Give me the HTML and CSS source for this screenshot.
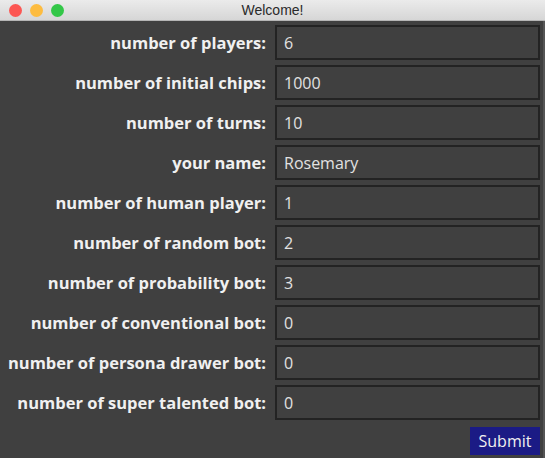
FILE: index.html
```html
<!DOCTYPE html>
<html>
<head>
<meta charset="utf-8">
<link rel="stylesheet" href="styles.css">
</head>
<body>
<div class="window">
  <div class="titlebar">
    <div class="lights">
      <span class="light red"></span>
      <span class="light yellow"></span>
      <span class="light green"></span>
    </div>
    <div class="title">Welcome!</div>
  </div>
  <div class="content">
    <div class="form">
      <label class="label">number of players:</label><div class="field">6</div>
      <label class="label">number of initial chips:</label><div class="field">1000</div>
      <label class="label">number of turns:</label><div class="field">10</div>
      <label class="label">your name:</label><div class="field">Rosemary</div>
      <label class="label">number of human player:</label><div class="field">1</div>
      <label class="label">number of random bot:</label><div class="field">2</div>
      <label class="label">number of probability bot:</label><div class="field">3</div>
      <label class="label">number of conventional bot:</label><div class="field">0</div>
      <label class="label">number of persona drawer bot:</label><div class="field">0</div>
      <label class="label">number of super talented bot:</label><div class="field">0</div>
    </div>
    <div class="actions">
      <button class="submit">Submit</button>
    </div>
  </div>
</div>
</body>
</html>
```
FILE: styles.css
```css
html, body {
  margin: 0;
  padding: 0;
  background: #404040;
}
.window {
  width: 545px;
  height: 458px;
  background: #404040;
  display: flex;
  flex-direction: column;
  box-sizing: border-box;
  border-right: 2px solid #555;
}
.titlebar {
  height: 20px;
  flex: none;
  margin-right: -2px;
  background: linear-gradient(#ebebeb, #d6d6d6);
  border-bottom: 1px solid #b5b5b5;
  position: relative;
  display: flex;
  align-items: center;
  justify-content: center;
}
.lights {
  position: absolute;
  left: 9px;
  top: 4px;
  display: flex;
  gap: 8px;
}
.light {
  width: 13px;
  height: 13px;
  border-radius: 50%;
  display: block;
}
.red { background: #fc5753; }
.yellow { background: #fdbc40; }
.green { background: #33c748; }
.title {
  font-family: "Liberation Sans", Arial, sans-serif;
  font-size: 14px;
  color: #2a2a2a;
}
.content {
  padding: 4px 0 0 0;
  display: flex;
  flex-direction: column;
  width: 540px;
}
.form {
  display: grid;
  grid-template-columns: 266px 265px;
  column-gap: 9px;
  row-gap: 5px;
  grid-auto-rows: 35px;
}
.label {
  font-family: "Open Sans", "Noto Sans", sans-serif;
  font-weight: 700;
  font-size: 16.5px;
  color: #f0f0f0;
  text-align: right;
  align-self: center;
  white-space: nowrap;
}
.field {
  box-sizing: border-box;
  border: 2px solid #232323;
  background: #404040;
  font-family: "Open Sans", "Noto Sans", sans-serif;
  font-size: 16px;
  color: #e2e2e2;
  padding: 0 7px;
  display: flex;
  align-items: center;
}
.actions {
  display: flex;
  justify-content: flex-end;
  padding-top: 7px;
}
.submit {
  width: 70px;
  height: 28px;
  background: #1b1b85;
  border: none;
  color: #f0f0f0;
  font-family: "Open Sans", "Noto Sans", sans-serif;
  font-size: 16px;
  padding: 0;
  margin: 0;
}
```
